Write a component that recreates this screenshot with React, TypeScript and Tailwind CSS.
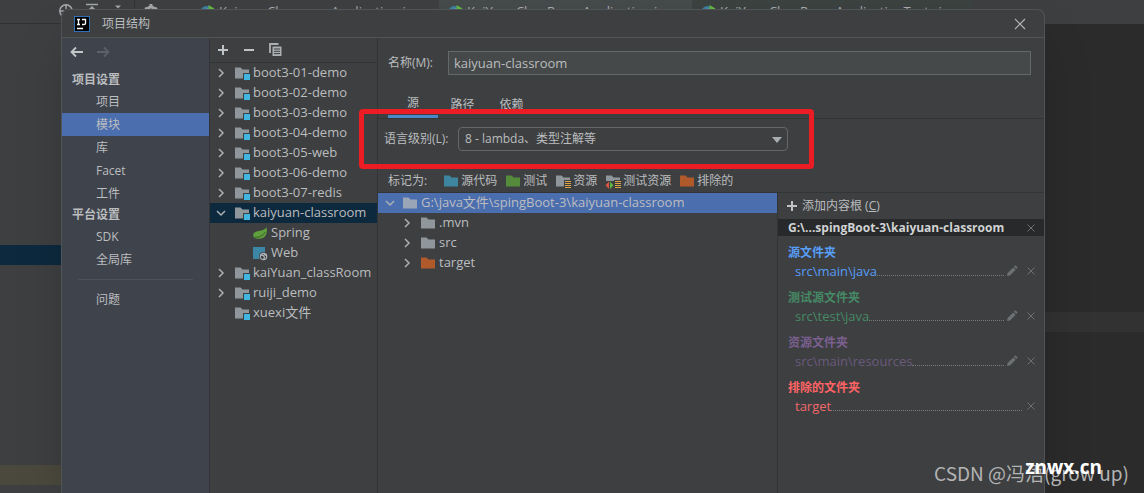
import React from 'react';
import type { ReactNode } from 'react';

const projectItems = ['项目', '模块', '库', 'Facet', '工件'];
const platformItems = ['SDK', '全局库'];

const tabFiles = [
  { name: 'KaiyuanClassroomApplication.java', className: 'w-[248px]' },
  { name: 'KaiYuanClassRoomApplication.java', className: 'w-[253px] bg-[#454a4b]' },
  { name: 'KaiYuanClassRoomApplicationTests.java', className: 'w-[281px] bg-[#3b4240]' },
];

type Module = { name: string; icon?: 'spring' | 'web'; open?: boolean; leaf?: boolean };

const modules: Module[] = [
  { name: 'boot3-01-demo' },
  { name: 'boot3-02-demo' },
  { name: 'boot3-03-demo' },
  { name: 'boot3-04-demo' },
  { name: 'boot3-05-web' },
  { name: 'boot3-06-demo' },
  { name: 'boot3-07-redis' },
  { name: 'kaiyuan-classroom', open: true },
  { name: 'Spring', icon: 'spring' },
  { name: 'Web', icon: 'web' },
  { name: 'kaiYuan_classRoom' },
  { name: 'ruiji_demo' },
  { name: 'xuexi文件', leaf: true },
];

const roots = [
  { title: '源文件夹', path: 'src\\main\\java', head: 'text-[#589df6]', body: 'text-[#589df6]', edit: true },
  { title: '测试源文件夹', path: 'src\\test\\java', head: 'text-[#468a65]', body: 'text-[#468a65]', edit: true },
  { title: '资源文件夹', path: 'src\\main\\resources', head: 'text-[#7b5f90]', body: 'text-[#6b5a7c]', edit: true },
  { title: '排除的文件夹', path: 'target', head: 'text-[#ff6464]', body: 'text-[#f0686c]', edit: false },
];

function Chevron({ open = false }: { open?: boolean }) {
  return (
    <svg viewBox="0 0 12 12" className="h-3 w-3 shrink-0" fill="none" stroke="#adb0b2" strokeWidth="1.5">
      <path d={open ? 'M2 4l4 4 4-4' : 'M4 2l4 4-4 4'} />
    </svg>
  );
}

function Folder({ color = '#8f979c', children }: { color?: string; children?: ReactNode }) {
  return (
    <svg viewBox="0 0 16 16" className="h-4 w-4 shrink-0">
      <path d="M1 2.5h5.5l2 2H15v9H1z" fill={color} />
      {children}
    </svg>
  );
}

function ModuleFolder() {
  return (
    <Folder>
      <path d="M9 8h7v7H9z" fill="#3d3f41" />
      <path d="M10 9h6v6h-6z" fill="#40b6e0" />
    </Folder>
  );
}

function ResourceLines() {
  return (
    <>
      <path d="M9 7h7v9H9z" fill="#3d3f41" />
      <path d="M10 8.5h6M10 10.5h6M10 12.5h6M10 14.5h6" stroke="#d9a343" strokeWidth="1.2" />
    </>
  );
}

function SpringIcon() {
  return (
    <svg viewBox="0 0 16 16" className="h-4 w-4 shrink-0">
      <path d="M14.6 2.2c.9 4.8 0 11.3-7.6 11.6-3 .2-5.800-.8-5.800-3.800C1.200 4.800 11.500 7 14.600 2.200z" fill="#5f9f3c" />
      <path d="M3 12.200c4 .4 8-1.200 10-5" stroke="#3c5a2d" strokeWidth="1" fill="none" />
    </svg>
  );
}

function WebIcon() {
  return (
    <svg viewBox="0 0 16 16" className="h-4 w-4 shrink-0">
      <path d="M1 2h12v12H1z" fill="#3d87a6" />
      <circle cx="11.5" cy="11.5" r="4.5" fill="#3d3f41" />
      <circle cx="11.5" cy="11.5" r="3.2" fill="none" stroke="#aeb4b8" strokeWidth="1.2" />
      <path d="M9 10l2.5.5 1 2-1 2M12 8.5l1 1.5 1.5.5" stroke="#aeb4b8" strokeWidth="1.3" fill="none" />
    </svg>
  );
}

function ClassIcon() {
  return (
    <svg viewBox="0 0 16 16" className="h-4 w-4 shrink-0">
      <circle cx="7.5" cy="8.5" r="6.5" fill="#3d7f9f" />
      <path d="M10 6.5a3 3 0 1 0 0 4" stroke="#c5d5dc" strokeWidth="1.3" fill="none" />
      <path d="M9.5 1l6 3.500-6 3.500z" fill="#62b543" />
    </svg>
  );
}

function Plus() {
  return (
    <svg viewBox="0 0 12 12" className="h-3 w-3 shrink-0" stroke="#c0c3c5" strokeWidth="2">
      <path d="M6 1v10M1 6h10" />
    </svg>
  );
}

function Cross() {
  return (
    <svg viewBox="0 0 10 10" className="h-[10px] w-[10px]" stroke="#6e7173" strokeWidth="1">
      <path d="M1.5 1.5l7 7M8.5 1.5l-7 7" />
    </svg>
  );
}

function Pencil() {
  return (
    <svg viewBox="0 0 12 12" className="h-3 w-3" fill="#6e7173">
      <path d="M1 11l.6-3 5.700-5.600 2.400 2.400L4 10.500zM8 1.700l.9-.9a.8.8 0 0 1 1.100 0l1.200 1.200a.8.8 0 0 1 0 1.100l-.9.9z" />
    </svg>
  );
}

function Backdrop() {
  return (
    <div className="absolute inset-0 flex flex-col" aria-hidden="true">
      <div className="flex h-6 shrink-0 items-center bg-[#3d3f41] text-[13px] text-[#a9abad]">
        <div className="flex h-full w-[191px] shrink-0 items-center border-b border-[#303234] pl-[58px]">
          <svg viewBox="0 0 104 24" className="h-6 w-[104px]" fill="none" stroke="#a4a7a9" strokeWidth="1.5">
            <circle cx="8" cy="11" r="6.2" />
            <path d="M8 4v5M1 11h5M10 11h5M28 4.500h12M34 13V8M30 11l4-4 4 4" />
            <path d="M57 5.500h6l-3 3z" fill="#a4a7a9" stroke="none" />
            <path d="M76.500 0v24" stroke="#323537" strokeWidth="1" />
            <circle cx="93" cy="11" r="4" strokeWidth="3" />
            <path d="M93 4v3M87 8l3 2M99 8l-3 2" strokeWidth="3" />
          </svg>
        </div>
        {tabFiles.map((tab) => (
          <div key={tab.name} className={`flex h-full shrink-0 items-center gap-1 px-2 ${tab.className}`}>
            <ClassIcon />
            <span className="grow">{tab.name}</span>
            <Cross />
          </div>
        ))}
      </div>
      <div className="flex grow">
        <div className="flex w-1/2 flex-col bg-[#3d3f41]">
          <div className="mt-[221px] h-5 bg-[#0d293e]" />
          <div className="mt-[200px] h-5 bg-[#4b493d]" />
        </div>
        <div className="w-1/2 bg-[#2b2b2b]">
          <div className="mt-[288px] h-5 bg-[#323232]" />
        </div>
      </div>
    </div>
  );
}

function NavItem({ label, selected = false }: { label: string; selected?: boolean }) {
  return (
    <li>
      <a
        href="#"
        className={`flex h-[23px] items-center pl-[34px] ${selected ? 'bg-[#4b6eaf]' : ''}`}
      >
        {label}
      </a>
    </li>
  );
}

function Sidebar() {
  return (
    <nav className="w-[148px] shrink-0 border-r border-[#323437] bg-[#3e434c]">
      <div className="mb-1 flex h-7 items-center gap-3 pl-2">
        <button type="button" aria-label="后退">
          <svg viewBox="0 0 14 12" className="h-3 w-[14px]" fill="none" stroke="#c4c7c9" strokeWidth="1.8">
            <path d="M13 6H2M6 1.500L1.500 6 6 10.500" />
          </svg>
        </button>
        <button type="button" aria-label="前进">
          <svg viewBox="0 0 14 12" className="h-3 w-[14px]" fill="none" stroke="#5c6068" strokeWidth="1.8">
            <path d="M1 6h11M8 1.500L12.500 6 8 10.500" />
          </svg>
        </button>
      </div>
      <h2 className="flex h-5 items-center pl-[10px] font-bold">项目设置</h2>
      <ul>
        {projectItems.map((label) => (
          <NavItem key={label} label={label} selected={label === '模块'} />
        ))}
      </ul>
      <h2 className="flex h-5 items-center pl-[10px] font-bold">平台设置</h2>
      <ul>
        {platformItems.map((label) => (
          <NavItem key={label} label={label} />
        ))}
      </ul>
      <hr className="mx-4 my-2 border-[#4c5159]" />
      <ul>
        <NavItem label="问题" />
      </ul>
    </nav>
  );
}

function ModuleTree() {
  return (
    <section className="w-[168px] shrink-0 border-r border-[#323536]">
      <div className="flex h-[25px] items-center gap-[14px] border-b border-[#323536] pl-[7px]">
        <button type="button" aria-label="添加"><Plus /></button>
        <button type="button" aria-label="移除">
          <svg viewBox="0 0 12 12" className="h-3 w-3" stroke="#c0c3c5" strokeWidth="2">
            <path d="M1 6h10" />
          </svg>
        </button>
        <button type="button" aria-label="复制">
          <svg viewBox="0 0 14 14" className="h-[14px] w-[14px]">
            <path d="M1 10V1h8.500" stroke="#adb0b2" strokeWidth="1.8" fill="none" />
            <path d="M3.500 3.500h9V13h-9z" fill="#adb0b2" />
            <path d="M5 6h6M5 8.300h6M5 10.600h6" stroke="#3d3f41" strokeWidth="1" />
          </svg>
        </button>
      </div>
      <ul className="text-[13px]">
        {modules.map((m) => (
          <li
            key={m.name}
            className={`flex h-5 items-center whitespace-nowrap ${m.icon ? 'pl-[42px]' : 'pl-[5px]'} ${m.open ? 'bg-[#0d293e]' : ''}`}
          >
            {!m.icon && <span className="mr-[7px] w-3">{!m.leaf && <Chevron open={m.open} />}</span>}
            {m.icon === 'spring' && <SpringIcon />}
            {m.icon === 'web' && <WebIcon />}
            {!m.icon && <ModuleFolder />}
            <span className="ml-[3px]">{m.name}</span>
          </li>
        ))}
      </ul>
    </section>
  );
}

function MarkButton({ label, children }: { label: string; children: ReactNode }) {
  return (
    <button type="button" className="flex items-center gap-[2px]">
      {children}
      {label}
    </button>
  );
}

function FileRow({ name, color }: { name: string; color?: string }) {
  return (
    <li className="flex h-5 items-center pl-[23px]">
      <Chevron />
      <span className="mr-[3px] ml-[7px]"><Folder color={color} /></span>
      {name}
    </li>
  );
}

function ContentRoots() {
  return (
    <aside className="w-[267px] shrink-0 border-l border-[#323536]">
      <button type="button" className="flex h-[26px] items-center gap-1 pl-2">
        <Plus />
        <span>添加内容根 (<u>C</u>)</span>
      </button>
      <div className="flex h-[17px] items-center justify-between bg-[#27292a] pr-2 pl-[10px] font-bold text-[#d0d2d3]">
        G:\...spingBoot-3\kaiyuan-classroom
        <button type="button" aria-label="移除内容根"><Cross /></button>
      </div>
      {roots.map((root) => (
        <div key={root.title} className="pt-2 pr-2 pb-[1px] pl-[10px]">
          <h3 className={`h-[18px] leading-[18px] font-bold ${root.head}`}>{root.title}</h3>
          <div className="flex h-[18px] items-center pl-[7px] text-[13px]">
            <span className={`leading-[18px] ${root.body}`}>{root.path}</span>
            <span className="mt-[9px] grow border-b border-dotted border-[#77797b]" />
            {root.edit && (
              <button type="button" aria-label="编辑" className="ml-[2px]"><Pencil /></button>
            )}
            <button type="button" aria-label="移除" className={root.edit ? 'ml-2' : 'ml-1'}><Cross /></button>
          </div>
        </div>
      ))}
    </aside>
  );
}

function ModuleEditor() {
  return (
    <main className="flex min-w-0 grow flex-col">
      <div className="flex items-center pt-[13px] pr-[13px] pl-[10px]">
        <label htmlFor="name" className="w-[60px] shrink-0">名称(M):</label>
        <input
          id="name"
          defaultValue="kaiyuan-classroom"
          className="h-6 min-w-0 grow border border-[#646869] bg-[#45494a] px-[5px] text-[13px] outline-none"
        />
      </div>
      <div role="tablist" className="mt-4 flex h-7 border-b border-[#323536] pl-[10px]">
        <button type="button" role="tab" aria-selected="true" className="w-[50px] border-b-3 border-[#4a88c7]">源</button>
        <button type="button" role="tab" className="w-[49px]">路径</button>
        <button type="button" role="tab" className="w-[49px]">依赖</button>
      </div>
      <div className="relative mt-2 flex items-center pl-[6px]">
        <label htmlFor="level" className="w-[74px] shrink-0">语言级别(L):</label>
        <div className="relative w-[330px]">
          <select
            id="level"
            className="h-6 w-full appearance-none rounded-sm border border-[#646869] bg-[#3d3f41] px-[6px] outline-none"
          >
            <option>8 - lambda、类型注解等</option>
          </select>
          <svg viewBox="0 0 10 6" className="pointer-events-none absolute top-[10px] right-[6px] h-[6px] w-[10px]" fill="#a9acae">
            <path d="M0 0h10L5 6z" />
          </svg>
        </div>
        <div className="pointer-events-none absolute -top-[18px] -left-[19px] h-[60px] w-[455px] rounded-sm border-5 border-[#ec1c24]" />
      </div>
      <div className="mt-[18px] flex h-6 items-center gap-2 border-b border-[#323536] pl-[10px] whitespace-nowrap">
        <span className="mr-2">标记为:</span>
        <MarkButton label="源代码"><Folder color="#3e86a0" /></MarkButton>
        <MarkButton label="测试"><Folder color="#558c3c" /></MarkButton>
        <MarkButton label="资源"><Folder><ResourceLines /></Folder></MarkButton>
        <MarkButton label="测试资源">
          <Folder>
            <ResourceLines />
            <path d="M0 8h9v8H0z" fill="#3d3f41" />
            <path d="M4 8.500V16L.5 12.200z" fill="#e0533f" />
            <path d="M5 8.500V16l3.500-3.800z" fill="#62b543" />
          </Folder>
        </MarkButton>
        <MarkButton label="排除的"><Folder color="#b05a2c" /></MarkButton>
      </div>
      <div className="flex grow">
        <ul className="min-w-0 grow text-[13px]">
          <li className="flex h-5 items-center bg-[#4b6eaf] pl-[6px] whitespace-nowrap">
            <Chevron open />
            <span className="mr-[3px] ml-[6px]"><Folder color="#9aa5b8" /></span>
            <span>G:\java文件\spingBoot-3\kaiyuan-classroom</span>
          </li>
          <FileRow name=".mvn" />
          <FileRow name="src" />
          <FileRow name="target" color="#b05a2c" />
        </ul>
        <ContentRoots />
      </div>
    </main>
  );
}

export default function App() {
  return (
    <div className="relative flex min-h-screen flex-col overflow-hidden bg-[#2b2b2b] font-['Open_Sans','Noto_Sans_CJK_SC',sans-serif] text-[12px] text-[#bbbdbf]">
      <Backdrop />
      <div className="relative mt-[9px] mr-[99px] ml-[61px] flex grow flex-col rounded-t-lg border border-b-0 border-[#515456] bg-[#3d3f41] shadow-2xl">
        <header className="flex h-7 shrink-0 items-center border-b border-[#515456] pr-[18px] pl-3">
          <svg viewBox="0 0 16 16" className="h-4 w-4">
            <rect x=".5" y=".5" width="15" height="15" fill="#000" stroke="#2f6fb5" />
            <path d="M3 3.500h3M4.500 3.500v5M3 8.500h3M8 3.500h3.500v4q0 1-1.500 1H8M3 12.500h6" stroke="#fff" strokeWidth="1.3" fill="none" />
          </svg>
          <h1 className="ml-3 grow">项目结构</h1>
          <button type="button" aria-label="关闭">
            <svg viewBox="0 0 12 12" className="h-3 w-3" stroke="#b5b8ba" strokeWidth="1.1">
              <path d="M1 1l10 10M11 1L1 11" />
            </svg>
          </button>
        </header>
        <div className="flex grow">
          <Sidebar />
          <ModuleTree />
          <ModuleEditor />
        </div>
      </div>
      <div className="pointer-events-none absolute right-[15px] bottom-[8px] font-['Noto_Sans_CJK_SC',sans-serif] text-[19px] leading-6 text-[#b4b4b4]">
        CSDN @冯浯(grow up)
      </div>
      <div className="pointer-events-none absolute right-[42px] bottom-[14px] text-[19px] leading-6 font-bold text-white">
        znwx.cn
      </div>
    </div>
  );
}
